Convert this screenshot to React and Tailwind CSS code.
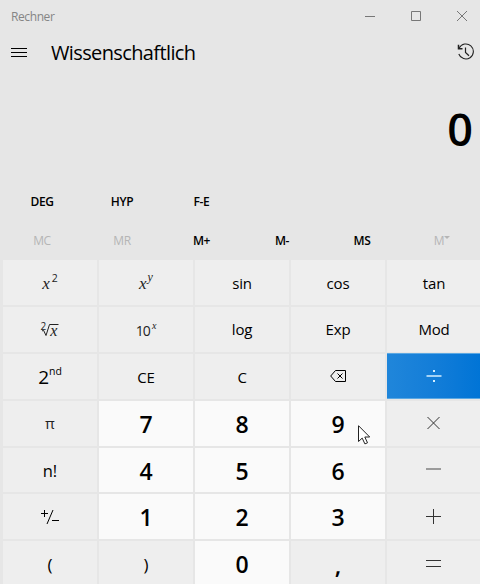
import React from 'react';

const ui = "font-['Open_Sans','Noto_Sans',sans-serif]";
const serif = "font-['Liberation_Serif',serif] italic";

function Key({ children, tone = 'bg-[#eeeeee]', className = '' }) {
  return (
    <button className={`flex items-center justify-center leading-none ${tone} ${className}`}>
      {children}
    </button>
  );
}

const Fn = ({ children, className = '' }) => (
  <Key className={`text-[15px] tracking-[-0.2px] ${className}`}>{children}</Key>
);

const Digit = ({ children }) => (
  <Key tone="bg-[#fafafa]" className="pt-[2px] text-[23px] font-semibold">{children}</Key>
);

function Sign({ d, className = 'stroke-[#333]' }) {
  return (
    <svg width="16" height="16" viewBox="0 0 16 16" fill="none" className={className}>
      <path d={d} />
    </svg>
  );
}

function TitleBar() {
  return (
    <header className="flex h-8 shrink-0 items-center justify-between pl-[11px] pr-[13px]">
      <span className="pt-px text-[12px] tracking-[-0.4px] text-[#858585]">Rechner</span>
      <div className="flex items-center gap-9 stroke-[#777]">
        <svg width="10" height="10" viewBox="0 0 10 10" fill="none"><path d="M0 5.5h10" /></svg>
        <svg width="10" height="10" viewBox="0 0 10 10" fill="none"><path d="M.5.5h9v9h-9z" /></svg>
        <svg width="10" height="10" viewBox="0 0 10 10" fill="none"><path d="M0 0l10 10M10 0L0 10" /></svg>
      </div>
    </header>
  );
}

function ModeBar() {
  return (
    <div className="flex h-10 shrink-0 items-center pl-[11px] pr-[5px]">
      <svg width="16" height="9" viewBox="0 0 16 9" fill="none" className="mt-px stroke-black">
        <path d="M0 .5h16M0 4.5h16M0 8.5h16" />
      </svg>
      <h1 className="ml-6 pt-[2px] text-[20px] leading-7 tracking-[-0.62px]">Wissenschaftlich</h1>
      <svg width="18" height="18" viewBox="0 0 18 18" fill="none" className="ml-auto stroke-[#222]">
        <path d="M1.8 11A7.5 7.5 0 1 0 2.2 5" strokeWidth="1.1" />
        <path d="M1.5 1.8v4h4" strokeWidth="1.5" />
        <path d="M8.5 4.5v5l3.5 3.2" strokeWidth="1.2" />
      </svg>
    </div>
  );
}

export default function App() {
  return (
    <main className={`flex h-[584px] w-[480px] flex-col overflow-hidden bg-[#e6e6e6] text-black ${ui}`}>
      <TitleBar />
      <ModeBar />
      <div className="flex h-[110px] shrink-0 items-center justify-end pr-[7px] pt-[2px] text-[45px] font-semibold leading-none">0</div>
      <div className="grid h-10 shrink-0 grid-cols-[80px_80px_80px_80px_80px] items-center pl-[2px] text-center text-[12px] font-semibold tracking-[-0.4px]">
        <span>DEG</span>
        <span>HYP</span>
        <span className="-ml-px">F-E</span>
      </div>
      <div className="grid h-[38px] shrink-0 grid-cols-[80px_80px_80px_80px_80px_80px] items-center pl-[2px] text-center text-[12px] font-semibold tracking-[-0.4px]">
        <span className="font-normal text-[#b5b5b5]">MC</span>
        <span className="font-normal text-[#b5b5b5]">MR</span>
        <span className="-ml-px">M+</span>
        <span>M-</span>
        <span>MS</span>
        <span className="flex justify-center font-normal text-[#b5b5b5]">
          M
          <svg width="6" height="4" viewBox="0 0 6 4" className="mt-[4px] fill-[#b5b5b5]"><path d="M0 0h6L3 3z" /></svg>
        </span>
      </div>
      <div className="grid w-[478px] shrink-0 grid-cols-[94px_94px_94px_94px_94px] grid-rows-[45px_45px_45px_45px_44px_45px_45px] gap-[2px] pl-[3px]">
        <Key className="text-[#222]">
          <span className={`pt-[2px] text-[17px] ${serif}`}>x</span>
          <span className="mb-[8px] ml-[2px] text-[10.5px]">2</span>
        </Key>
        <Key className="text-[#222]">
          <span className={`pt-[2px] text-[17px] ${serif}`}>x</span>
          <span className={`mb-[11px] ml-[1px] text-[12px] ${serif}`}>y</span>
        </Key>
        <Fn className="pt-[2px]">sin</Fn>
        <Fn className="pt-[2px]">cos</Fn>
        <Fn className="pt-[2px]">tan</Fn>

        <Key className="text-[#222]">
          <span className="mb-[7px] text-[10px]">2</span>
          <svg width="17" height="14" viewBox="0 0 17 14" fill="none" className="-ml-[4px] -mr-[10px] stroke-[#222]">
            <path d="M0 8l1.5-.8L4 12.5 7.5 1.5h9" />
          </svg>
          <span className={`pt-[2px] pl-[1px] pr-[2px] text-[16px] ${serif}`}>x</span>
        </Key>
        <Key className="text-[#222]">
          <span className="pt-[2px] text-[14px] tracking-[-0.9px]">10</span>
          <span className={`mb-[8px] ml-[2px] text-[10px] ${serif}`}>x</span>
        </Key>
        <Fn>log</Fn>
        <Fn>Exp</Fn>
        <Fn>Mod</Fn>

        <Key>
          <span className="pt-[1px] text-[19px]">2</span>
          <span className="mb-[10px] text-[10.5px]">nd</span>
        </Key>
        <Fn className="pt-[2px]">CE</Fn>
        <Fn className="pt-[2px]">C</Fn>
        <Key>
          <svg width="16" height="12" viewBox="0 0 16 12" fill="none" className="mb-px stroke-black">
            <path d="M5.5.5h10v11h-10L.7 6z" />
            <path d="M7.5 3.5l5 5M12.5 3.5l-5 5" />
          </svg>
        </Key>
        <Key tone="bg-linear-to-r from-[#2086da] to-[#0074d6]" className="-mt-px border-y border-[#5ba8e3]">
          <svg width="16" height="14" viewBox="0 0 16 14" className="mr-px fill-[#d5f0ff]">
            <path d="M.5 6.3h15v1.4H.5zM7 1h2v2H7zM7 11h2v2H7z" />
          </svg>
        </Key>

        <Key className="text-[15px] text-[#222]">π</Key>
        <Digit>7</Digit>
        <Digit>8</Digit>
        <Digit>9</Digit>
        <Key><Sign d="M1.5 1l12 12M13.5 1l-12 12" /></Key>

        <Key className="pt-[3px] text-[16.5px]">n!</Key>
        <Digit>4</Digit>
        <Digit>5</Digit>
        <Digit>6</Digit>
        <Key><Sign d="M0 7h15" className="stroke-[#777] [stroke-width:1.4]" /></Key>

        <Key>
          <svg width="18" height="16" viewBox="0 0 18 16" fill="none" className="stroke-black">
            <path d="M0 4.5h7M3.5 1v7M6 15L12 1M11 11.5h7" />
          </svg>
        </Key>
        <Digit>1</Digit>
        <Digit>2</Digit>
        <Digit>3</Digit>
        <Key>
          <Sign d="M0 7.5h15M7.5 0v15" />
        </Key>

        <Key className="pt-[2px] text-[17px]">(</Key>
        <Key className="pt-[2px] text-[17px]">)</Key>
        <Digit>0</Digit>
        <Key className="pt-[3px] text-[24px] font-semibold">,</Key>
        <Key><Sign d="M0 4.5h15M0 10.5h15" /></Key>
      </div>
      <svg width="13" height="20" viewBox="0 0 13 20" className="absolute left-[358px] top-[425px] fill-white stroke-[#222]">
        <path d="M.5.7v15.8l3.7-3.4 2.7 5.8 2.6-1.1-2.7-5.8h4.9z" />
      </svg>
    </main>
  );
}
